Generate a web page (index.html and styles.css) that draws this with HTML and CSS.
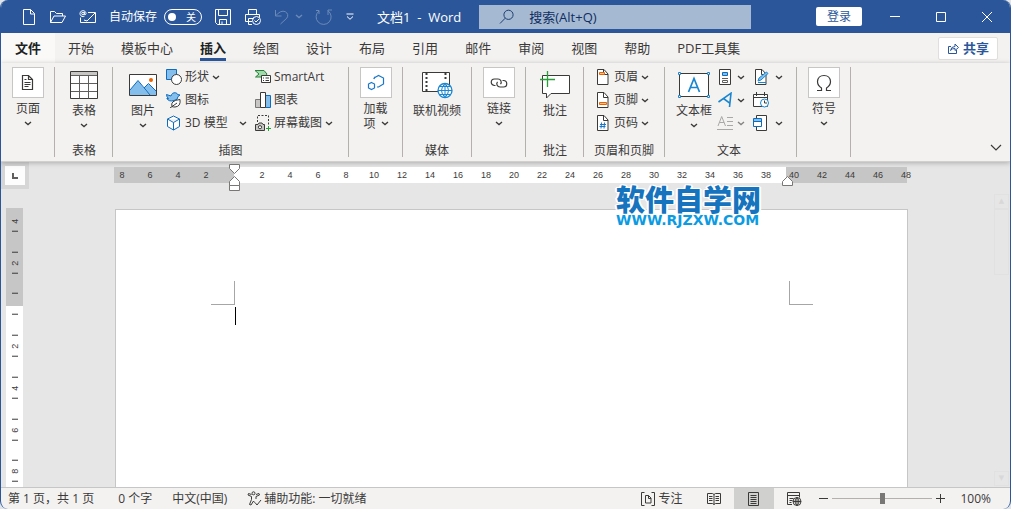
FILE: index.html
```html
<!DOCTYPE html>
<html lang="zh-CN">
<head>
<meta charset="utf-8">
<title>文档1 - Word</title>
<link rel="stylesheet" href="styles.css">
</head>
<body>
<svg class="defs" aria-hidden="true">
  <symbol id="chev" viewBox="0 0 8 5"><path d="M1 1l3 2.600L7 1" fill="none" stroke="currentColor" stroke-width="1.300"/></symbol>
  <symbol id="page" viewBox="0 0 16 16"><path d="M2.500 .5h6.500l4 4.500v10.500H2.500z" fill="#fff" stroke="#3b3a39"/><path d="M8.500 .5v5h4.500" fill="none" stroke="#3b3a39"/></symbol>
</svg>
<div class="window">
  <header class="titlebar">
    <div class="quick">
      <button class="qbtn" aria-label="新建"><svg width="16" height="18" viewBox="0 0 16 18"><path d="M2.500 1.500h7l4 4v11h-11zM9.500 1.500v4.500h4" /></svg></button>
      <button class="qbtn" aria-label="打开"><svg width="18" height="16" viewBox="0 0 18 16"><path d="M1.500 13.500v-11h4l2 2h6v2.500M1.500 13.500l3.500-6.500h11.500l-3.500 6.500z"/></svg></button>
      <button class="qbtn" aria-label="电子邮件"><svg width="18" height="16" viewBox="0 0 18 16"><path d="M9 3.500h7.500v10h-15v-5M5 11l3 1L16 4"/><circle cx="4" cy="4.500" r="1.300"/><path d="M5.300 3v2.500q1.700.7 1.700-1a3 3 0 1 0-1.500 2.700"/></svg></button>
      <label class="autosave">自动保存<input type="checkbox" role="switch" class="switch-input"><span class="switch"><i></i>关</span></label>
      <button class="qbtn" aria-label="保存"><svg width="18" height="18" viewBox="0 0 18 18"><path d="M1.500 1.500h15v15h-13l-2-2zM4.500 1.500v6h9v-6M5.500 16.500v-5h7v5M8 16v-2.500"/></svg></button>
      <button class="qbtn wide" aria-label="快速打印"><svg width="18" height="18" viewBox="0 0 18 18"><path d="M4.500 6.500v-5h8v5M8 13.500H1.500v-7h14v3M4.500 16.500v-6h5M4.500 16.500H8"/><circle cx="12.500" cy="12.500" r="4"/><path d="M10.500 12.500l1.500 1.500 3-3"/></svg></button>
      <button class="qbtn faded" disabled aria-label="撤消"><svg width="16" height="18" viewBox="0 0 16 18"><path d="M1.500 2v6h6M1.800 7.700q5-6 9.500-4 4 2.500 1.500 6.500L6.500 16"/></svg><svg class="chev" width="8" height="5"><use href="#chev"/></svg></button>
      <button class="qbtn faded" disabled aria-label="重复"><svg width="18" height="18" viewBox="0 0 18 18"><path d="M4 2.500H1M4 2.500V6M4 3a7.500 7.500 0 1 0 9-.2M13 7V2h4"/></svg></button>
      <button class="qbtn" aria-label="自定义快速访问工具栏"><svg width="10" height="8" viewBox="0 0 10 8"><path d="M1.500 1h7M2 3.500l3 2.800 3-2.800"/></svg></button>
    </div>
    <h1 class="doc-title">文档1&nbsp; -&nbsp; Word</h1>
    <label class="search"><svg width="16" height="16" viewBox="0 0 16 16"><circle cx="9.500" cy="5.800" r="4.600"/><path d="M6.200 9.200L1 14.500"/></svg><input type="text" placeholder="搜索(Alt+Q)" aria-label="搜索"></label>
    <button class="login">登录</button>
    <div class="caption">
      <button aria-label="最小化"><svg width="12" height="12"><path d="M1 5.500h10"/></svg></button>
      <button aria-label="最大化"><svg width="12" height="12"><path d="M1.500 1.500h9v9h-9z"/></svg></button>
      <button aria-label="关闭"><svg width="12" height="12"><path d="M1 1l10 10M11 1L1 11"/></svg></button>
    </div>
  </header>

  <nav class="tabs">
    <button class="file">文件</button>
    <button>开始</button><button>模板中心</button><button class="active">插入</button><button>绘图</button><button>设计</button><button>布局</button><button>引用</button><button>邮件</button><button>审阅</button><button>视图</button><button>帮助</button><button>PDF工具集</button>
    <button class="share"><svg width="12" height="12" viewBox="0 0 12 12"><path d="M4 4.500H1.500v7h8V8M3.500 8.500q.5-4 4.500-4V2l3.500 3.500L8 8.500V6.500q-3-.2-4.500 2z"/></svg>共享</button>
  </nav>

  <section class="ribbon">
    <div class="group">
      <button class="big"><span class="box"><svg width="16" height="18" viewBox="0 0 16 18"><path d="M2.500 1.500h6l4 4v10h-10zM8.500 1.500v4h4" fill="none" stroke="#3b3a39" stroke-width="1.200"/><path d="M4.500 5.500h2M4.500 8.500h6M4.500 10.500h6M4.500 12.500h4" stroke="#3b3a39"/></svg></span><span class="cap">页面</span><svg class="chev" width="8" height="5"><use href="#chev"/></svg></button>
      <span class="glabel"></span>
    </div>
    <div class="group mid">
      <button class="big"><span class="pic"><svg width="28" height="28" viewBox="0 0 28 28"><path d="M.5.5h27v27H.5z" fill="#fff" stroke="#3b3a39"/><path d="M1 1h26v3.500H1z" fill="#c8c6c4"/><path d="M1 4.500h26M1 12.500h26M1 20.500h26M9.500 4.500v23M18.500 4.500v23" stroke="#605e5c" fill="none"/></svg></span><span class="cap">表格</span><svg class="chev" width="8" height="5"><use href="#chev"/></svg></button>
      <span class="glabel">表格</span>
    </div>
    <div class="group pictures">
      <div class="body">
        <button class="big narrow"><span class="pic"><svg width="28" height="22" viewBox="0 0 28 22"><path d="M.5.5h27v21H.5z" fill="#fff"/><path d="M1 16l8-9.500L20 21H1zM15 14l4.500-4L27 17v4h-7z" fill="#83beec"/><path d="M1 16l8-9.500L21 21M15 14l4.500-4.500L27 17" fill="none" stroke="#0f6cbd"/><circle cx="22" cy="6" r="2" fill="#ea6300"/><path d="M.5.5h27v21H.5z" fill="none" stroke="#3b3a39"/></svg></span><span class="cap">图片</span><svg class="chev" width="8" height="5"><use href="#chev"/></svg></button>
        <div class="col stack">
          <button class="row"><svg width="16" height="16"><path d="M.5.5h10v10H.5z" fill="#83beec" stroke="#0f6cbd"/><circle cx="10.500" cy="10.500" r="5" fill="#fff" stroke="#3b3a39"/></svg>形状<svg class="chev" width="8" height="5"><use href="#chev"/></svg></button>
          <button class="row"><svg width="16" height="16"><path d="M.5 2.500l4.500 1.500Q6 .3 9.500.8q1.500 0 2 1.700l2.500.5-2 1.500Q12 8 8 8.500 3 10 .8 6.500h1.700Q.5 5 .5 2.500z" fill="#83beec" stroke="#0f6cbd"/><path d="M6 14.500Q4 8.500 14 7.500q1 7-5 7.500-2 0-3-.5z" fill="#fff" stroke="#3b3a39"/><path d="M4 16l7-5" stroke="#3b3a39"/></svg>图标</button>
          <button class="row"><svg width="16" height="16"><path d="M7.500 1l6 3v7.500l-6 3.500-6-3.500V4zM1.500 4l6 3.500L13.500 4M7.500 7.500V15" fill="#fff" stroke="#0f6cbd"/></svg>3D 模型<svg class="chev push" width="8" height="5"><use href="#chev"/></svg></button>
        </div>
        <div class="col">
          <button class="row"><svg width="16" height="16"><path d="M0 1.500h9l3 3.500-2 3H.5L4 5z" fill="#a1dbab" stroke="#28803a"/><path d="M6.500 6.500h9v7h-9z" fill="#fff" stroke="#3b3a39"/><path d="M8 9h1M8 11.500h1M10.500 9H14M10.500 11.500H14" stroke="#3b3a39"/></svg>SmartArt</button>
          <button class="row"><svg width="16" height="16"><path d="M.5 7.500h5v8h-5z" fill="#c8c6c4" stroke="#797775"/><path d="M10.500 3.500h5v12h-5z" fill="#83beec" stroke="#0f6cbd"/><path d="M5.500.5h5v15h-5z" fill="#fff" stroke="#3b3a39"/></svg>图表</button>
          <button class="row"><svg width="16" height="16"><path d="M2.500 7V.5h11V10" fill="none" stroke="#3b3a39" stroke-dasharray="2 1.500"/><path d="M.5 9.500h2.500L4 8h3l1 1.500h1.500v6H.500z" fill="#c8c6c4" stroke="#3b3a39"/><circle cx="5" cy="12.200" r="1.600" fill="#fff" stroke="#3b3a39"/><path d="M13.500 11v5M11 13.500h5" stroke="#28a03a"/></svg>屏幕截图<svg class="chev" width="8" height="5"><use href="#chev"/></svg></button>
        </div>
      </div>
      <span class="glabel">插图</span>
    </div>
    <div class="group">
      <button class="big"><span class="box"><svg width="18" height="18" viewBox="0 0 18 18"><path d="M7 5V4l4.500-2.500L16.500 4v6l-5 3H10M8 2.800L7 5" fill="none" stroke="#1a76c8" stroke-width="1.200"/><path d="M4.500 8.500L7.500 10v4l-3 1.500L1.500 14v-4z" fill="none" stroke="#1a76c8" stroke-width="1.200"/></svg></span><span class="cap two">加载<br>项 <svg class="chev inline" width="8" height="5"><use href="#chev"/></svg></span></button>
      <span class="glabel"></span>
    </div>
    <div class="group media">
      <button class="big"><span class="pic"><svg class="video" width="32" height="28" viewBox="0 0 32 28"><path d="M1.500 1.500h27v19h-27z" fill="#fff" stroke="#3b3a39"/><path d="M5.500 2v18M24.500 2v8" stroke="#3b3a39" stroke-width="2" stroke-dasharray="2 2"/><circle cx="24" cy="19.500" r="7" fill="#fff" stroke="#1a86cf" stroke-width="1.300"/><path d="M24 12.500v14M17 19.500h14M18.500 15.500h11M18.500 23.500h11M24 12.500q-7 7 0 14M24 12.500q7 7 0 14" fill="none" stroke="#1a86cf"/></svg></span><span class="cap">联机视频</span></button>
      <span class="glabel">媒体</span>
    </div>
    <div class="group">
      <button class="big"><span class="box"><svg width="18" height="14" viewBox="0 0 18 14"><path d="M5.500 9.500H4.500A3.200 3.200 0 0 1 4.500 3h3.500a3.200 3.200 0 0 1 2.500 5.200M12.500 4.500h1a3.200 3.200 0 0 1 0 6.500H10a3.200 3.200 0 0 1-2.500-5.200" fill="none" stroke="#3b3a39" stroke-width="1.200"/></svg></span><span class="cap">链接</span><svg class="chev" width="8" height="5"><use href="#chev"/></svg></button>
      <span class="glabel"></span>
    </div>
    <div class="group mid">
      <button class="big"><span class="pic"><svg width="32" height="30" viewBox="0 0 32 30"><path d="M3.500 5.500h27v18H12L7.500 28v-4.500h-4z" fill="#fff" stroke="#3b3a39"/><path d="M8.500 1v16M1 9.500h15" stroke="#28a03a" stroke-width="1.300"/></svg></span><span class="cap">批注</span></button>
      <span class="glabel">批注</span>
    </div>
    <div class="group headers">
      <div class="col">
        <button class="row"><svg width="16" height="16"><use href="#page"/><path d="M4.500 3.500h5v2h-5z" fill="#f9c28d" stroke="#ea6300"/></svg>页眉<svg class="chev" width="8" height="5"><use href="#chev"/></svg></button>
        <button class="row"><svg width="16" height="16"><use href="#page"/><path d="M4.500 10.500h7v2h-7z" fill="#f9c28d" stroke="#ea6300"/></svg>页脚<svg class="chev" width="8" height="5"><use href="#chev"/></svg></button>
        <button class="row"><svg width="16" height="16"><use href="#page"/><path d="M6.500 7.500l-.5 6M9.500 7.500L9 13.500M5 9.500h6M4.500 11.500h6" stroke="#1a76c8"/></svg>页码<svg class="chev" width="8" height="5"><use href="#chev"/></svg></button>
      </div>
      <span class="glabel">页眉和页脚</span>
    </div>
    <div class="group text">
      <div class="body">
        <button class="big"><span class="pic"><svg width="32" height="26" viewBox="0 0 32 26"><path d="M1.500 1.500h29v23h-29z" fill="#fff" stroke="#3b3a39"/><path d="M.5.5h2v2h-2zM29.500.5h2v2h-2zM.5 23.500h2v2h-2zM29.500 23.500h2v2h-2z" fill="#fff" stroke="#1a86cf"/><path d="M10.500 20L16 6.500 21.500 20M12.500 15.500h7" fill="none" stroke="#1a86cf" stroke-width="1.700"/></svg></span><span class="cap">文本框</span><svg class="chev" width="8" height="5"><use href="#chev"/></svg></button>
        <div class="col tools">
          <button class="row" aria-label="文档部件"><svg width="16" height="16"><path d="M2.500.5h11v15h-11z" fill="#fff" stroke="#3b3a39"/><path d="M5.500 3.500h5v3h-5z" fill="#83beec" stroke="#0f6cbd"/><path d="M5 9.500h6M5.500 11.500h5v2h-5z" fill="none" stroke="#605e5c"/></svg><svg class="chev" width="8" height="5"><use href="#chev"/></svg></button>
          <button class="row" aria-label="艺术字"><svg width="16" height="16"><path d="M1.500 10L14 1.200 12.500 15M6.500 6.500l6.200 4.700" fill="none" stroke="#1a86cf" stroke-width="1.600"/></svg><svg class="chev" width="8" height="5"><use href="#chev"/></svg></button>
          <button class="row dim" disabled aria-label="首字下沉"><svg width="16" height="16"><path d="M1 11L4.700 1.500 8.500 11M2.500 7.500h4.500M10 2.500h6M10 6.500h6M10 10.500h6M0 14.500h16" fill="none" stroke="#797775"/></svg><svg class="chev" width="8" height="5"><use href="#chev"/></svg></button>
        </div>
        <div class="col tools">
          <button class="row" aria-label="签名行"><svg width="16" height="16"><use href="#page"/><path d="M5 12l1-3 7.500-6L15 4.500 8 11zM5 13.500h8" fill="#83beec" stroke="#1a86cf"/></svg><svg class="chev" width="8" height="5"><use href="#chev"/></svg></button>
          <button class="row" aria-label="日期和时间"><svg width="16" height="16"><path d="M.5 2.500h14v12H.5zM.5 5.500h14M3.500 0v4M11.500 0v4" fill="#fff" stroke="#3b3a39"/><circle cx="11.500" cy="11" r="4" fill="#fff" stroke="#1a86cf"/><path d="M11.500 8.500V11h2.500" fill="none" stroke="#3b3a39"/></svg></button>
          <button class="row" aria-label="对象"><svg width="16" height="16"><path d="M3.500.5h10v15h-10z" fill="#fff" stroke="#3b3a39"/><path d="M.5 3.500h8v8h-8z" fill="#fff" stroke="#0f6cbd"/><path d="M1 4h7v2.500H1z" fill="#83beec"/><path d="M0 6.500h9" stroke="#0f6cbd"/></svg><svg class="chev" width="8" height="5"><use href="#chev"/></svg></button>
        </div>
      </div>
      <span class="glabel">文本</span>
    </div>
    <div class="group">
      <button class="big"><span class="box"><svg width="18" height="18" viewBox="0 0 18 18"><path d="M2 16.500h4.500V14Q2.500 11.500 2.500 7.500 3 1.500 9 1.500t6.500 6Q15.500 11.500 11.500 14v2.500H16" fill="none" stroke="#3b3a39" stroke-width="1.200"/></svg></span><span class="cap">符号</span><svg class="chev" width="8" height="5"><use href="#chev"/></svg></button>
      <span class="glabel"></span>
    </div>
    <button class="collapse" aria-label="折叠功能区"><svg width="12" height="8"><path d="M1 1l5 5 5-5" fill="none" stroke="#3b3a39" stroke-width="1.200"/></svg></button>
  </section>

  <main class="workspace">
    <div class="side">
      <button class="corner" aria-label="左对齐制表符"><svg width="8" height="8"><path d="M2 1v5h5" fill="none" stroke="#605e5c" stroke-width="2"/></svg></button>
      <div class="vruler">
        <div class="vmarks"><span>4</span><span>2</span><span></span><span>2</span><span>4</span><span>6</span><span>8</span></div>
      </div>
    </div>
    <div class="canvas">
      <div class="hruler">
        <div class="nums"><span>8</span><span>6</span><span>4</span><span>2</span><span></span><span>2</span><span>4</span><span>6</span><span>8</span><span>10</span><span>12</span><span>14</span><span>16</span><span>18</span><span>20</span><span>22</span><span>24</span><span>26</span><span>28</span><span>30</span><span>32</span><span>34</span><span>36</span><span>38</span><span>40</span><span>42</span><span>44</span><span>46</span><span>48</span></div>
        <svg class="indent left" width="11" height="28"><path d="M.5.5h10v4l-5 5-5-5zM5.500 12.500l5 5v4H.5v-4zM.5 21.500h10v5H.5z"/></svg>
        <svg class="indent right" width="11" height="10"><path d="M5.500.5l5 5v4H.5v-4z"/></svg>
        <div class="watermark"><strong>软件自学网</strong><em>WWW.RJZXW.COM</em></div>
      </div>
      <article class="sheet">
        <div class="crops"><i class="crop-l"></i><i class="crop-r"></i></div>
        <div class="caret"></div>
      </article>
    </div>
    <div class="scroll"><span class="arrow">▲</span><span class="thumb"></span><span class="arrow end">▼</span></div>
  </main>

  <footer class="status">
    <span class="pages">第 1 页，共 1 页</span>
    <span class="words">0 个字</span>
    <span class="lang">中文(中国)</span>
    <button class="access"><svg width="15" height="15" viewBox="0 0 15 15"><circle cx="6.500" cy="2.300" r="1.500"/><path d="M4.500 3.500L1.500 2.500 1 4l3.500 1.500v3l-2 5 1.500.5 2.500-4 1 1.500M9 3.500l3-1 .5 1.500L9 5.500V8M8 11.500l2 2.500 4-5"/></svg>辅助功能: 一切就绪</button>
    <button class="focus"><svg width="14" height="14"><path d="M3.500.5h-3v13h3M10.500.5h3v13h-3M4.500 3.500h3l2.500 2.500v5H4.500zM7.500 3.500v3H10"/></svg>专注</button>
    <div class="views">
      <button aria-label="阅读视图"><svg width="14" height="13"><path d="M.5 1.500h5l1.500 1 1.500-1h5v10h-5l-1.500 1-1.500-1h-5zM7 2.500v10M2 4.500h3.500M2 6.500h3.500M2 8.500h3.500M8.500 4.500H12M8.500 6.500H12M8.500 8.500H12"/></svg></button>
      <button class="on" aria-label="页面视图"><svg width="12" height="14"><path d="M.5.5h10v13H.5zM2.500 3.500h6M2.500 5.500h6M2.500 7.500h6M2.500 9.500h6M2.500 11.500h6"/></svg></button>
      <button aria-label="Web 版式视图"><svg width="15" height="14"><path d="M5 12.500H.5V.5h12v5M.5 3.500h12M2.500 6.500h4M2.500 8.500h3M2.500 10.500h2"/><circle cx="10" cy="9.500" r="4"/><path d="M6 9.500h8M10 5.500v8M10 5.500q-4 4 0 8M10 5.500q4 4 0 8"/></svg></button>
    </div>
    <div class="zoom">
      <button aria-label="缩小"><svg width="9" height="9"><path d="M0 4.500h9"/></svg></button>
      <input type="range" min="0" max="100" value="50" aria-label="显示比例">
      <button aria-label="放大"><svg width="9" height="9"><path d="M0 4.500h9M4.500 0v9"/></svg></button>
      <span>100%</span>
    </div>
  </footer>
</div>
</body>
</html>
```

FILE: styles.css
```css
* { box-sizing: border-box; }

body {
  margin: 0;
  background: #dfe5ea;
  color: #3b3a39;
  font: 12px/16px "Open Sans", "Noto Sans CJK SC", sans-serif;
}

button {
  margin: 0;
  padding: 0;
  border: 0;
  background: none;
  color: inherit;
  font: inherit;
  white-space: nowrap;
}

svg { display: block; flex: none; }
i, em { font-style: normal; }
.defs { position: absolute; width: 0; height: 0; }

.window {
  display: flex;
  flex-direction: column;
  min-height: 100vh;
  overflow: hidden;
  border: 0 solid #2b579a;
  border-width: 0 1px;
  border-radius: 8px;
  background: #f3f2f1;
}

/* Title bar */
.titlebar {
  display: flex;
  align-items: center;
  height: 33px;
  background: #2b579a;
  color: #fff;
}
.titlebar svg { fill: none; stroke: #fff; }
.quick { display: flex; align-items: center; gap: 12px; padding-left: 20px; }
.qbtn { display: flex; align-items: center; gap: 5px; }
.quick .faded { opacity: .3; }
.autosave { display: flex; align-items: center; gap: 7px; }
.switch-input { position: absolute; opacity: 0; }
.switch {
  display: flex;
  align-items: center;
  justify-content: space-between;
  width: 38px;
  height: 16px;
  padding: 0 5px 0 3px;
  border: 1px solid #fff;
  border-radius: 8px;
  font-size: 10px;
}
.switch i { width: 8px; height: 8px; border-radius: 50%; background: #fff; }
.doc-title { margin: 0 18px 0 22px; font-size: 13px; font-weight: 400; white-space: nowrap; }
.search {
  display: flex;
  flex: 0 1 272px;
  align-items: center;
  gap: 14px;
  height: 24px;
  padding-left: 20px;
  background: #a6b9d2;
}
.search svg { stroke: #1e3f73; }
.search input {
  flex: 1;
  min-width: 0;
  padding: 0;
  border: 0;
  outline: 0;
  background: none;
  font: inherit;
  font-size: 13px;
}
.search input::placeholder { color: #0f2f63; opacity: 1; }
.login {
  width: 46px;
  height: 19px;
  margin-left: auto;
  border-radius: 2px;
  background: #fff;
  color: #2b579a;
}
.caption { display: flex; padding-left: 10px; }
.caption button { display: grid; place-items: center; width: 46px; height: 30px; }

/* Tabs */
.tabs { display: flex; gap: 1px; height: 30px; font-size: 13px; }
.tabs button { padding: 0 13px; }
.tabs .file {
  margin-right: -1px;
  padding: 0 14px;
  background: #faf9f8;
  color: #201f1e;
  font-weight: 700;
}
.tabs .active { position: relative; color: #201f1e; font-weight: 700; }
.tabs .active::after {
  content: "";
  position: absolute;
  inset: auto 13px 2px;
  height: 3px;
  background: #2b579a;
}
.tabs .share {
  display: flex;
  align-items: center;
  align-self: center;
  gap: 4px;
  height: 23px;
  margin: 0 12px 0 auto;
  padding: 0 8px;
  border: 1px solid #e1dfdd;
  border-radius: 2px;
  background: #fff;
  color: #2b579a;
  font-weight: 700;
}
.share svg { fill: none; stroke: #2b579a; }

/* Ribbon */
.ribbon {
  position: relative;
  display: flex;
  padding: 4px 0;
  border-bottom: 1px solid #d2d0ce;
  box-shadow: 0 1px 5px rgba(0, 0, 0, .25);
}
.group {
  display: flex;
  flex-direction: column;
  justify-content: space-between;
  min-height: 90px;
  padding: 0 10px 0 11px;
  border-right: 1px solid #b3b0ad;
}
.group.mid { padding: 0 12px 0 13px; }
.group.pictures { padding: 0 15px; }
.group.media, .group.headers { padding: 0 10px; }
.group.text { padding: 0 13px 0 10px; }
.body { display: flex; gap: 8px; }
.text .body { gap: 4px; }
.text .big { min-width: 38px; }
.glabel { line-height: 13px; text-align: center; white-space: nowrap; }
.big { display: flex; flex-direction: column; align-items: center; min-width: 32px; }
.big.narrow { min-width: 30px; }
.big .chev { margin: 2px 0; }
.box {
  display: grid;
  place-items: center;
  width: 32px;
  height: 31px;
  border: 1px solid #c8c6c4;
  background: #fff;
}
.pic { display: grid; place-items: center; height: 33px; padding-top: 2px; }
.cap { padding-top: 1px; line-height: 20px; }
.cap.two { padding-top: 3px; line-height: 15px; text-align: left; }
.big .chev.inline { display: inline-block; margin: 0 0 2px 2px; }
.col { display: flex; flex-direction: column; gap: 3px; }
.stack { min-width: 81px; }
.row { display: flex; align-items: center; gap: 3px; height: 20px; }
.headers .col { padding-left: 1px; }
.tools .row { gap: 4px; }
.tools + .tools { padding-left: 4px; }
.tools + .tools .row { gap: 6px; }
.chev.push { margin-left: auto; }
.dim { opacity: .6; }
.collapse { align-self: flex-end; margin: 0 8px 5px auto; }

/* Workspace */
.workspace { display: flex; flex: 1; background: #e6e6e6; }
.side { display: flex; flex-direction: column; width: 28px; }
.corner {
  display: grid;
  place-items: center;
  height: 27px;
  border: 4px solid #d6d6d6;
  background: #fdfdfd;
}
.vruler {
  flex: 1;
  width: 17px;
  margin: 19px 0 0 5px;
  overflow: hidden;
  background: linear-gradient(#c6c6c6 98px, #fff 98px);
  font: 9px/10px "Liberation Sans", sans-serif;
}
.vmarks { display: flex; flex-direction: column; height: 292px; margin: -8px 0 -5px; }
.vmarks span {
  position: relative;
  display: grid;
  flex: 1;
  place-items: center;
  transform: rotate(180deg);
  writing-mode: vertical-rl;
}
.vmarks span::before, .vmarks span::after {
  content: "";
  position: absolute;
  left: 5px;
  width: 6px;
  height: 1px;
  background: #3b3a39;
}
.vmarks span::before { top: 10px; }
.vmarks span::after { bottom: 10px; }
.vmarks span:first-child::after { display: none; }
.canvas { display: flex; flex: 1; flex-direction: column; align-items: center; min-width: 0; }
.hruler {
  position: relative;
  width: 793px;
  margin: 5px 2px 26px 0;
  background: linear-gradient(90deg, #c6c6c6 120px, #fff 120px 672px, #c6c6c6 672px);
  font: 9px/16px "Liberation Sans", sans-serif;
}
.nums { display: flex; margin: 0 -13px 0 -6px; }
.nums span { flex: 1; height: 16px; text-align: center; }
.indent { position: absolute; fill: #fff; stroke: #797775; }
.indent.left { top: -3px; left: 115px; }
.indent.right { top: 9px; left: 668px; }
.watermark {
  position: absolute;
  z-index: 1;
  top: 17px;
  left: 502px;
  display: flex;
  flex-direction: column;
  color: #1673bd;
  text-shadow: 1px 1px #fff, -1px -1px #fff, 1px -1px #fff, -1px 1px #fff, 2px 0 #fff, -2px 0 #fff;
}
.watermark strong { font: 900 29px/28px "Noto Sans CJK SC", sans-serif; }
.watermark em { color: #0b9be3; font: 700 14px/16px "DejaVu Sans", sans-serif; }
.sheet {
  flex: 1;
  width: 793px;
  padding: 71px 94px 0 95px;
  border: 1px solid #c6c6c6;
  border-bottom: 0;
  background: #fff;
}
.crops { display: flex; justify-content: space-between; }
.crops i { width: 24px; height: 24px; border: 0 solid #a6a6a6; }
.crops .crop-l { border-width: 0 1px 1px 0; }
.crops .crop-r { border-width: 0 0 1px 1px; }
.caret { width: 1px; height: 18px; margin: 2px 0 0 24px; background: #000; }
.scroll { display: flex; flex-direction: column; width: 16px; padding: 32px 1px 1px 0; }
.arrow {
  height: 15px;
  border: 1px solid #e1e1e1;
  color: #d8d8d8;
  font: 7px/13px "DejaVu Sans", sans-serif;
  text-align: center;
}
.thumb { height: 66px; border: 1px solid #e1e1e1; }
.arrow.end { margin-top: auto; }

/* Status bar */
.status {
  display: flex;
  align-items: center;
  height: 22px;
  padding: 0 19px 0 7px;
  border-top: 1px solid #c6c6c6;
  white-space: nowrap;
}
.status svg { fill: none; stroke: #3b3a39; }
.words { margin-left: 24px; }
.lang { margin: 0 20px; }
.status button { display: flex; align-items: center; }
.status .access { gap: 2px; }
.status .focus { gap: 3px; margin-left: auto; }
.views { display: flex; align-self: stretch; padding-left: 12px; }
.views button { justify-content: center; width: 40px; }
.views .on { background: #d0d0ce; }
.zoom { display: flex; align-items: center; gap: 4px; padding-left: 5px; }
.zoom span { padding-left: 11px; }
.zoom input {
  width: 100px;
  height: 12px;
  margin: 0;
  appearance: none;
  background: linear-gradient(#b3b0ad, #b3b0ad) center / 100% 1px no-repeat;
}
.zoom input::-webkit-slider-thumb {
  width: 5px;
  height: 11px;
  appearance: none;
  background: #797775;
}
```
